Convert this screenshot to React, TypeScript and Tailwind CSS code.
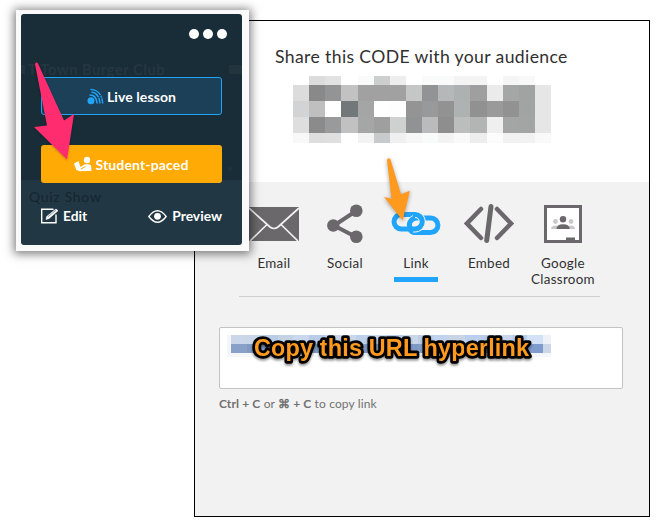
import React from "react";

const codeCells: string[][] = [
  ["#fff", "#dcdcdc", "#e2e2e2", "#fff", "#f9fbfb", "#ccced0", "#ededed", "#fff", "#f9fbfb", "#f9fbfb", "#f4f4f4", "#f4f4f4", "#fff", "#f5f5f5", "#f8f8f8", "#fff"],
  ["#dcdcdc", "#898989", "#939496", "#c2c2c2", "#a1a1a1", "#a1a1a1", "#a1a1a1", "#c5c7c7", "#929394", "#b5b8b9", "#adb1b1", "#9f9f9f", "#ebebeb", "#a5a7a7", "#a1a2a2", "#e6e6e6"],
  ["#d2d3d5", "#bfbfbf", "#fff", "#72777a", "#a4a6a6", "#fff", "#fdfdfd", "#949494", "#97999b", "#929292", "#afb2b2", "#919191", "#9a9a9a", "#929292", "#a2a4a4", "#e6e6e6"],
  ["#dedede", "#8b8b8b", "#989a9c", "#c1c1c1", "#a5a7a7", "#9f9f9f", "#cfd1d1", "#919294", "#b9bbbc", "#8e8e8e", "#bcbebe", "#b3b5b5", "#efefef", "#a4a5a5", "#a3a4a4", "#e6e6e6"],
  ["#f8f8f8", "#dedede", "#dfdfdf", "#fff", "#f3f3f3", "#c8cacb", "#f0f0f0", "#f6f6f6", "#f9fbfb", "#f3f3f3", "#f9f9f9", "#ededed", "#fcfcfc", "#f1f1f1", "#f2f2f2", "#f9f9f9"],
];

const urlTop = ["#cbd7e8", "#c9d5e8", "#b9cde9", "#c3d2e5", "#c9d8ed", "#b8cbe8", "#c6d4e8", "#cad8ec", "#bfd0eb", "#c9d8ed", "#b7cce9", "#c9d5e8", "#bccfe8", "#c2d3ed", "#c9d4e4", "#bacfee", "#b8cbe8", "#c8d7ed", "#bcd0ee", "#d2e1f5", "#eef2f8"];
const urlBottom = ["#89a0c8", "#8299c1", "#7f99c5", "#859dc6", "#8ca4cc", "#7f99c5", "#88a0c9", "#859dc6", "#7f99c5", "#89a0c8", "#8299c1", "#7f99c5", "#859dc6", "#8ca4cc", "#7f99c5", "#88a0c9", "#859dc6", "#7f99c5", "#89a0c8", "#7f9bcc", "#cbd6e7"];

function CodeMosaic() {
  return (
    <div className="grid h-[67px] w-[258px] grid-cols-16 grid-rows-[9px_16px_16px_16px_10px]">
      {codeCells.flat().map((c, i) => (
        <span key={i} style={{ backgroundColor: c }} />
      ))}
    </div>
  );
}

function MailIcon() {
  return (
    <svg width="50" height="34" viewBox="0 0 50 34">
      <rect width="50" height="34" fill="#6a686a" />
      <path d="M0 1 L21 20 Q25 23 29 20 L50 1 M1 34 L18 17.5 M49 34 L32 17.5" fill="none" stroke="#f2f2f2" strokeWidth="1.7" />
    </svg>
  );
}

function ShareIcon() {
  return (
    <svg width="36" height="39" viewBox="0 0 36 39" fill="#6a686a">
      <path d="M29 7 L7 21.5 L29 33" fill="none" stroke="#6a686a" strokeWidth="4" />
      <circle cx="29.3" cy="6.7" r="6.3" />
      <circle cx="6.3" cy="21.5" r="6.2" />
      <circle cx="29.3" cy="32.7" r="6.3" />
    </svg>
  );
}

function LinkIcon() {
  return (
    <svg width="50" height="26" viewBox="0 0 50 26" fill="none" strokeWidth="5">
      <path d="M25 3.5 H10.3 A7.2 7.2 0 0 0 10.3 18 H24" stroke="#21a5fb" />
      <path d="M26 21.5 H39.7 A7.2 7.2 0 0 0 39.7 7 H25.5 A7.2 7.2 0 0 0 18.8 15" stroke="#f2f2f2" strokeWidth="7" />
      <path d="M22 21.5 H39.7 A7.2 7.2 0 0 0 39.7 7 H26 A7.2 7.2 0 0 0 18.5 15.5 Q18.8 20.5 23 21.5" stroke="#21a5fb" />
      <path d="M24 3.5 A7.2 7.2 0 0 1 24 18 H22" stroke="#f2f2f2" strokeWidth="7" />
      <path d="M22 3.5 H24 A7.2 7.2 0 0 1 24 18 H21" stroke="#21a5fb" />
    </svg>
  );
}

function CodeIcon() {
  return (
    <svg width="50" height="39" viewBox="0 0 50 39" fill="none" stroke="#6a686a" strokeWidth="4.5" strokeLinecap="round" strokeLinejoin="round">
      <path d="M17 5 L3 19.5 L17 34 M33 5 L47 19.5 L33 34" strokeLinejoin="miter" />
      <path d="M27 2.5 L22.7 36.5" strokeWidth="5" />
    </svg>
  );
}

function ClassroomIcon() {
  return (
    <svg width="38" height="38" viewBox="0 0 38 38">
      <rect x="1.5" y="1.5" width="35" height="35" fill="#fff" stroke="#6a686a" strokeWidth="3" />
      <g fill="#c9c9c9">
        <circle cx="11.5" cy="16.5" r="2.4" />
        <circle cx="27" cy="16.5" r="2.4" />
        <path d="M7 24 Q7 20.5 12 20.5 Q16 20.5 16 24 Z M22 24 Q22 20.5 27 20.5 Q31 20.5 31 24 Z" />
      </g>
      <circle cx="19" cy="14.3" r="3.2" fill="#6a686a" />
      <path d="M12.5 24 Q12.5 19.3 19 19.3 Q25.7 19.3 25.7 24 Z" fill="#6a686a" />
      <rect x="22" y="32.5" width="9" height="4" fill="#6a686a" />
    </svg>
  );
}

function Tab({ icon, label, width, active }: { icon: React.ReactNode; label: React.ReactNode; width: string; active?: boolean }) {
  return (
    <div className={`${width} flex shrink-0 flex-col items-center`}>
      <div className="flex h-[39px] items-center">{icon}</div>
      <div className="mt-[12px] text-center text-[13.4px] leading-[16px] tracking-[0.3px] whitespace-nowrap text-[#303030]">{label}</div>
      {active && <div className="mt-[6px] h-[5px] w-[44px] bg-[#21a5fb]" />}
    </div>
  );
}

function SharePanel() {
  return (
    <main className="flex h-[497px] w-[456px] flex-col border border-black bg-white">
      <header className="flex h-[161px] shrink-0 flex-col pl-[80px]">
        <h1 className="mt-[24px] text-[17.6px] leading-[24px] tracking-[0.37px] whitespace-nowrap text-[#303030]">Share this CODE with your audience</h1>
        <div className="mt-[7px] pl-[18px]">
          <CodeMosaic />
        </div>
      </header>
      <section className="flex-1 bg-[#f2f2f2] pl-[24px]">
        <nav className="ml-[20px] flex h-[115px] w-[361px] border-b border-[#cfcfcf] pt-[22px]">
          <Tab width="w-[70px]" icon={<MailIcon />} label="Email" />
          <Tab width="w-[72px]" icon={<ShareIcon />} label="Social" />
          <Tab width="w-[70px]" icon={<LinkIcon />} label="Link" active />
          <Tab width="w-[76px]" icon={<CodeIcon />} label="Embed" />
          <Tab width="w-[72px]" icon={<ClassroomIcon />} label={<>Google<br />Classroom</>} />
        </nav>
        <div className="relative mt-[30px] h-[62px] w-[404px] rounded-[2px] border border-[#c3c3c3] bg-white pt-[7px] pl-[7px]">
          <div className="grid w-[324px] grid-cols-[4px_repeat(20,15.6px)_8px] grid-rows-[9px_9px_4px]">
            <span className="row-span-2 bg-[#f3f5f9]" />
            {urlTop.map((c, i) => <span key={i} style={{ backgroundColor: c }} />)}
            {urlBottom.map((c, i) => <span key={i} style={{ backgroundColor: c }} />)}
            <span className="col-span-22 bg-[#f4f6fa]" />
          </div>
          <svg className="absolute top-0 left-[24px] overflow-visible" width="300" height="44">
            <text x="10" y="28" textLength="275" fill="#ff9a1f" stroke="#000" strokeWidth="5.4" strokeLinejoin="round" paintOrder="stroke" className="font-['Liberation_Sans',sans-serif] text-[23.5px] font-bold drop-shadow-[0_2px_1px_rgba(0,0,0,0.4)]">Copy this URL hyperlink</text>
          </svg>
        </div>
        <p className="mt-[7px] text-[12px] leading-[16px] tracking-[0.13px] text-[#707070]"><b>Ctrl + C</b> or <b>⌘ + C</b> to copy link</p>
      </section>
    </main>
  );
}

function LiveIcon() {
  return (
    <svg width="17" height="17" viewBox="0 0 17 17" fill="none" stroke="#21a5fb" strokeWidth="1.5">
      <circle cx="4" cy="12.7" r="3.5" fill="#21a5fb" stroke="none" />
      <path d="M2.5 6.9 Q9.3 6.5 10.2 15.5" />
      <path d="M4.5 4 Q12.4 5.5 13 15.5" strokeDasharray="9 .7" />
      <path d="M3.5 1.3 Q14.7 1.8 15.7 15.5" strokeDasharray="12 .8 2 .8" strokeWidth="1.3" />
    </svg>
  );
}

function StudentIcon() {
  return (
    <svg width="18" height="16" viewBox="0 0 18 16" fill="#fff">
      <circle cx="13" cy="4" r="3.2" />
      <path d="M0 7.5 L4.5 4.9 L6.5 11 L10.7 8.3 H15 Q17.3 8.5 17.3 11 V15 H10.5 L6 15.2 L2.3 14 Z" />
      <path d="M6.8 13 L11.3 10.7" stroke="#ffaa05" />
    </svg>
  );
}

function EditIcon() {
  return (
    <svg width="18" height="16" viewBox="0 0 18 16" fill="none" stroke="#fff">
      <path d="M12.5 1.2 H.7 V14.7 H15 V6.5" strokeWidth="1.4" />
      <path d="M5 11.5 L5.7 8.5 L15 1 L17 2.7 L8 10.5 Z" fill="#fff" strokeWidth=".6" />
      <path d="M6.7 9 L15 2.2" stroke="#213743" strokeWidth=".5" />
    </svg>
  );
}

function EyeIcon() {
  return (
    <svg width="19" height="13" viewBox="0 0 19 13" fill="none" stroke="#fff">
      <path d="M.8 6.5 Q9.5 -5 18.2 6.5 Q9.5 18 .8 6.5 Z" strokeWidth="1.3" />
      <circle cx="9.5" cy="6.3" r="3.4" fill="#fff" stroke="none" />
    </svg>
  );
}

function LessonCard() {
  return (
    <aside className="absolute top-[10px] left-[16px] h-[241px] w-[233px] bg-[#fafafa] p-[5px] pt-[4px] shadow-[0_1px_9px_2px_rgba(0,0,0,0.5)]">
      <div className="relative flex h-[231px] w-[221px] flex-col overflow-hidden rounded-[3px] bg-[linear-gradient(#182d38_0_166px,#213743_166px)] px-[20px] font-bold text-white">
        <span className="absolute top-[45px] left-[7px] text-[14.5px] tracking-[0.6px] whitespace-nowrap text-[#253640]">T Town Burger Club</span>
        <span className="absolute top-[172px] left-[8px] text-[14px] font-normal tracking-[0.7px] whitespace-nowrap text-[#142630]">Quiz Show</span>
        <span className="absolute top-[51px] left-0 h-[9px] w-[4px] bg-[#22343e]" />
        <span className="absolute top-[51px] right-0 h-[9px] w-[13px] bg-[#22343e]" />
        <span className="absolute top-[153px] right-[10px] size-[4px] rounded-full bg-[#23343e]" />
        <div className="mt-[15px] -mr-[5px] flex justify-end gap-[4px]">
          <i className="size-[10px] rounded-full bg-white" />
          <i className="size-[10px] rounded-full bg-white" />
          <i className="size-[10px] rounded-full bg-white" />
        </div>
        <button className="relative mt-[38px] flex h-[38px] w-[181px] shrink-0 items-center justify-center gap-[3px] rounded-[3px] border border-[#21a5fb] bg-[#1b4058] text-[14px] tracking-[0.1px] whitespace-nowrap">
          <LiveIcon />Live lesson
        </button>
        <button className="relative mt-[30px] flex h-[38px] w-[181px] shrink-0 items-center justify-center gap-[3px] rounded-[3px] bg-[#ffaa05] text-[14px] tracking-[0.15px] whitespace-nowrap">
          <StudentIcon />Student-paced
        </button>
        <div className="relative mt-[23px] flex h-[20px] items-center justify-between text-[13.8px]">
          <span className="flex items-center gap-[4px]"><EditIcon />Edit</span>
          <span className="flex items-center gap-[5px]"><EyeIcon />Preview</span>
        </div>
      </div>
    </aside>
  );
}

export default function App() {
  return (
    <div className="relative h-[527px] w-[662px] overflow-hidden bg-white pt-[20px] pl-[194px] font-[Lato,sans-serif]">
      <SharePanel />
      <LessonCard />
      <svg className="absolute top-[56px] left-[30px] drop-shadow-[0_1px_1px_rgba(0,0,0,0.25)]" width="50" height="108" viewBox="30 56 50 108">
        <path d="M35 64 Q36 61.5 38 63.5 L64 120.5 L74 114 L67 159.5 L34 127 L47 125.5 Z" fill="#ff2d70" />
      </svg>
      <svg className="absolute top-[154px] left-[380px] drop-shadow-[0_1px_2px_rgba(0,0,0,0.35)]" width="36" height="72" viewBox="380 154 36 72">
        <path d="M387 160 Q388 157 390.3 159 L401 194.3 L410 190.7 L402.7 220.5 L384 197 L391.5 198.7 Z" fill="#ff9a1f" />
      </svg>
    </div>
  );
}
